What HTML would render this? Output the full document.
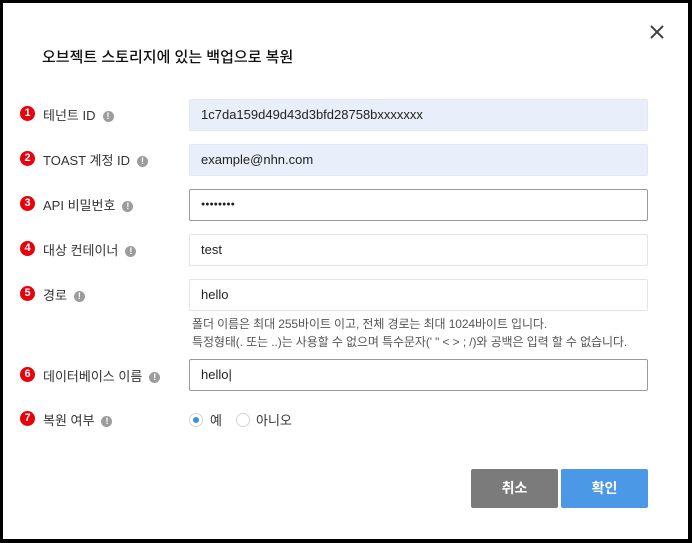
<!DOCTYPE html>
<html><head><meta charset="utf-8"><style>
*{box-sizing:border-box;margin:0;padding:0}
html,body{width:692px;height:543px;overflow:hidden;background:#000}
body{font-family:"Liberation Sans","Noto Sans CJK KR",sans-serif;color:#333}
.dlg{position:absolute;left:3px;top:3px;width:685px;height:536px;background:#fff}
.title{position:absolute;left:42px;top:46px;font-size:15px;font-weight:500;color:#111}
.close{position:absolute;left:649px;top:24px;width:16px;height:16px}
.num{position:absolute;left:20px;width:15px;height:15px;border-radius:50%;background:#e8000b;color:#fff;font-size:11px;font-weight:bold;text-align:center;line-height:15px}
.lbl{position:absolute;left:43px;font-size:13px;color:#333;white-space:nowrap}
.info{display:inline-block;width:11px;height:11px;border-radius:50%;background:#9c9c9c;color:#fff;font-size:9px;font-weight:bold;text-align:center;line-height:11px;margin-left:7px;vertical-align:1px}
.inp{position:absolute;left:189px;width:459px;height:32px;border:1px solid #e4e4e4;border-radius:2px;font-size:13px;padding-left:11px;line-height:30px;color:#222}
.blue{background:#e9effa;border-color:#e3e8f2}
.dark{border-color:#9a9a9a}
.help{position:absolute;left:192px;top:315px;font-size:12px;color:#555;line-height:18px;letter-spacing:-0.1px}
.radio{position:absolute;top:413px;width:14px;height:14px;border-radius:50%;border:1px solid #d5d5d5;background:#fff}
.btn{position:absolute;top:469px;width:87px;height:39px;border-radius:2px;color:#fff;font-size:14px;font-weight:bold;text-align:center;line-height:39px}
</style></head><body>
<div class="dlg"></div>
<div class="title">오브젝트 스토리지에 있는 백업으로 복원</div>
<svg class="close" viewBox="0 0 16 16"><path d="M2 2L14 14M14 2L2 14" stroke="#444" stroke-width="2"/></svg>

<div class="num" style="top:106px">1</div><div class="lbl" style="top:105px">테넌트 ID<span class="info">!</span></div>
<div class="inp blue" style="top:99px">1c7da159d49d43d3bfd28758bxxxxxxx</div>

<div class="num" style="top:151px">2</div><div class="lbl" style="top:150px">TOAST 계정 ID<span class="info">!</span></div>
<div class="inp blue" style="top:144px">example@nhn.com</div>

<div class="num" style="top:196px">3</div><div class="lbl" style="top:195px">API 비밀번호<span class="info">!</span></div>
<div class="inp dark" style="top:189px;font-size:7px;letter-spacing:0px">●●●●●●●●</div>

<div class="num" style="top:241px">4</div><div class="lbl" style="top:240px">대상 컨테이너<span class="info">!</span></div>
<div class="inp" style="top:234px">test</div>

<div class="num" style="top:286px">5</div><div class="lbl" style="top:285px">경로<span class="info">!</span></div>
<div class="inp" style="top:279px">hello</div>
<div class="help">폴더 이름은 최대 255바이트 이고, 전체 경로는 최대 1024바이트 입니다.<br>특정형태(. 또는 ..)는 사용할 수 없으며 특수문자(' " &lt; &gt; ; /)와 공백은 입력 할 수 없습니다.</div>

<div class="num" style="top:367px">6</div><div class="lbl" style="top:366px">데이터베이스 이름<span class="info">!</span></div>
<div class="inp dark" style="top:359px">hello|</div>

<div class="num" style="top:411px">7</div><div class="lbl" style="top:410px">복원 여부<span class="info">!</span></div>
<div class="radio" style="left:189px"><div style="position:absolute;left:3px;top:3px;width:6px;height:6px;border-radius:50%;background:#3a8ee6"></div></div>
<div class="lbl" style="left:210px;top:410px">예</div>
<div class="radio" style="left:236px"></div>
<div class="lbl" style="left:256px;top:410px">아니오</div>

<div class="btn" style="left:471px;background:#7b7b7b">취소</div>
<div class="btn" style="left:561px;background:#4a98e6">확인</div>
</body></html>
